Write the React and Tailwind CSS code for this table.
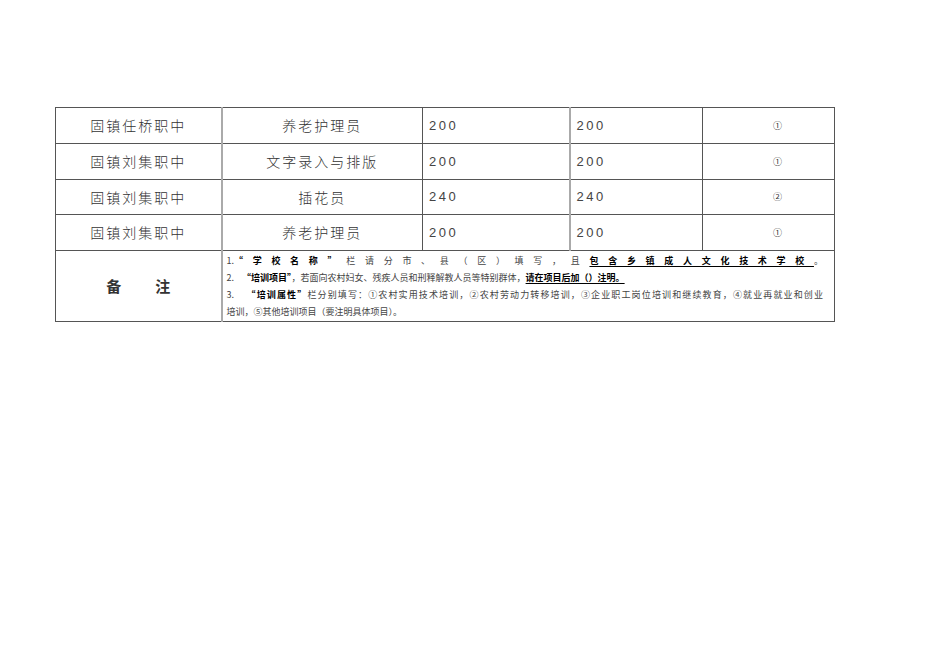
import React from "react";

const rows = [
  { school: "固镇任桥职中", item: "养老护理员", a: "200", b: "200", c: "①" },
  { school: "固镇刘集职中", item: "文字录入与排版", a: "200", b: "200", c: "①" },
  { school: "固镇刘集职中", item: "插花员", a: "240", b: "240", c: "②" },
  { school: "固镇刘集职中", item: "养老护理员", a: "200", b: "200", c: "①" },
];

const cjk = { fontFamily: '"Noto Sans CJK SC", sans-serif' };
const num = { fontFamily: '"Liberation Sans", sans-serif' };

export default function App() {
  return (
    <div className="w-[950px] h-[672px] bg-white pt-[107px] pl-[55px]" style={cjk}>
      <table className="w-[779px] table-fixed border-collapse text-[#333]">
        <colgroup>
          <col className="w-[166px]" />
          <col className="w-[201px]" />
          <col className="w-[147px]" />
          <col className="w-[133px]" />
          <col className="w-[132px]" />
        </colgroup>
        <tbody>
          {rows.map((r, i) => (
            <tr key={i} className={i === 2 ? "h-[35px]" : "h-[36px]"}>
              <td className="border border-[#555] text-center text-[14px] font-light tracking-[2px] p-0">
                {r.school}
              </td>
              <td className="border border-[#555] border-l-2 border-l-[#aaa] text-center text-[14px] font-light tracking-[2px] p-0">
                {r.item}
              </td>
              <td className="border border-[#555] pl-[6px] text-[13px] tracking-[2.5px] text-[#444] p-0" style={num}>
                {r.a}
              </td>
              <td className="border border-[#555] border-l-2 border-l-[#aaa] pl-[6px] text-[13px] tracking-[2.5px] text-[#444] p-0" style={num}>
                {r.b}
              </td>
              <td className="border border-[#555] text-center pl-[18px] text-[9px] p-0">{r.c}</td>
            </tr>
          ))}
          <tr className="h-[71px]">
            <td className="border border-[#555] text-center text-[15px] font-bold p-0">
              <span className="inline-flex gap-[34px]">
                <span>备</span>
                <span>注</span>
              </span>
            </td>
            <td
              colSpan={4}
              className="border border-[#555] border-l-2 border-l-[#aaa] pl-[4px] pr-[11px] py-0 text-[9px] leading-[17px] text-[#444] align-middle"
            >
              <div className="text-justify [text-align-last:justify]">
                1.<b className="text-black">“学校名称”</b>栏请分市、县（区）填写，且
                <b className="text-black underline underline-offset-2">包含乡镇成人文化技术学校</b>。
              </div>
              <div>
                2.&nbsp;&nbsp;&nbsp;&nbsp;<b className="text-black">“培训项目”</b>，若面向农村妇女、残疾人员和刑释解教人员等特别群体，
                <b className="text-black underline underline-offset-2">请在项目后加（）注明。</b>
              </div>
              <div className="text-justify [text-align-last:justify]">
                3.&nbsp;&nbsp;&nbsp;&nbsp;<b className="text-black">“培训属性”</b>栏分别填写：①农村实用技术培训，②农村劳动力转移培训，③企业职工岗位培训和继续教育，④就业再就业和创业
              </div>
              <div>培训，⑤其他培训项目（要注明具体项目）。</div>
            </td>
          </tr>
        </tbody>
      </table>
    </div>
  );
}
